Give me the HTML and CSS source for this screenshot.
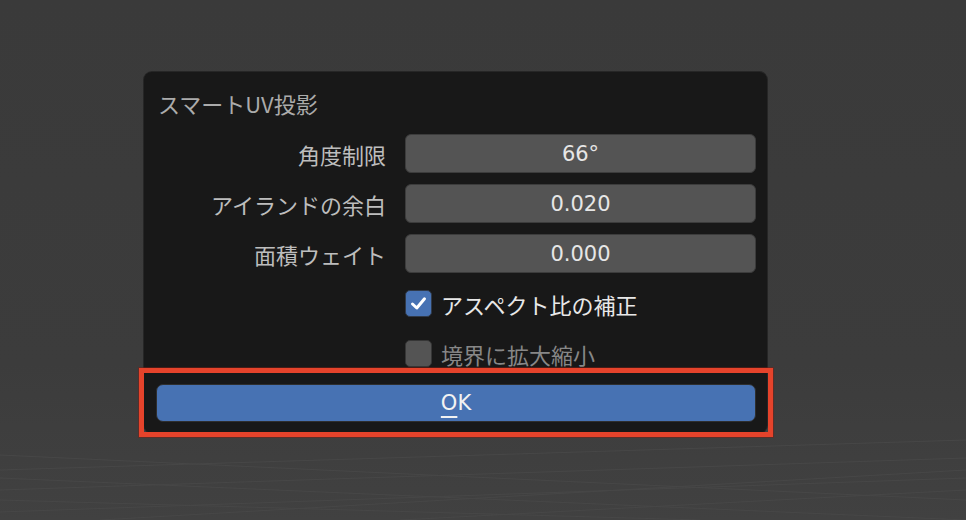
FILE: index.html
```html
<!DOCTYPE html>
<html lang="ja">
<head>
<meta charset="utf-8">
<title>スマートUV投影</title>
<link rel="stylesheet" href="styles.css">
</head>
<body>
<div class="viewport">
  <svg class="grid" width="966" height="520" viewBox="0 0 966 520" aria-hidden="true">
    <g stroke="#474747" stroke-width="1" fill="none">
      <line x1="0" y1="470" x2="966" y2="440"/>
      <line x1="0" y1="490" x2="966" y2="458"/>
      <line x1="0" y1="512" x2="966" y2="478"/>
      <line x1="0" y1="455" x2="966" y2="500"/>
      <line x1="0" y1="478" x2="966" y2="520"/>
      <line x1="0" y1="500" x2="700" y2="520"/>
      <line x1="100" y1="520" x2="966" y2="470"/>
      <line x1="400" y1="520" x2="966" y2="490"/>
    </g>
  </svg>

  <div class="panel">
    <div class="title">スマートUV投影</div>
    <div class="rows">
      <div class="label">角度制限</div>
      <div class="field">66°</div>

      <div class="label">アイランドの余白</div>
      <div class="field">0.020</div>

      <div class="label">面積ウェイト</div>
      <div class="field">0.000</div>

      <div class="label"></div>
      <div class="check on">
        <span class="box"><svg width="19" height="19" viewBox="0 0 19 19"><path d="M3.5 10 L7.8 14 L15.5 4.8" stroke="#fff" stroke-width="3" fill="none" stroke-linecap="round" stroke-linejoin="round"/></svg></span>
        <span class="ctext">アスペクト比の補正</span>
      </div>

      <div class="label"></div>
      <div class="check off">
        <span class="box"></span>
        <span class="ctext">境界に拡大縮小</span>
      </div>
    </div>
    <div class="ok"><span class="ul">O</span>K</div>
  </div>

  <div class="highlight"></div>
</div>
</body>
</html>
```

FILE: styles.css
```css
* { box-sizing: border-box; }

html, body {
  margin: 0;
  padding: 0;
}

body {
  width: 966px;
  height: 520px;
  overflow: hidden;
  background: #3c3c3c;
  font-family: "DejaVu Sans", "Noto Sans CJK JP", sans-serif;
}

.viewport {
  position: relative;
  width: 966px;
  height: 520px;
  background: linear-gradient(#3a3a3a 0%, #3c3c3c 70%, #414141 100%);
}

.grid {
  position: absolute;
  left: 0;
  top: 0;
}

.panel {
  position: absolute;
  left: 144px;
  top: 72px;
  width: 623px;
  padding: 18px 11px 11px 12px;
  background: #181818;
  border-radius: 8px;
  box-shadow: 0 0 0 1px #262626;
}

.title {
  height: 26px;
  line-height: 26px;
  padding-left: 2px;
  margin-bottom: 18px;
  font-size: 22px;
  color: #ababab;
  font-family: "Noto Sans CJK JP", "DejaVu Sans", sans-serif;
}

.rows {
  display: grid;
  grid-template-columns: 230px 351px;
  grid-auto-rows: 39px;
  column-gap: 19px;
  row-gap: 11px;
}

.label {
  display: flex;
  align-items: center;
  justify-content: flex-end;
  font-size: 22px;
  color: #bdbdbd;
  font-family: "Noto Sans CJK JP", "DejaVu Sans", sans-serif;
}

.field {
  display: flex;
  align-items: center;
  justify-content: center;
  background: #545454;
  border: 1px solid #3c3c3c;
  border-radius: 6px;
  font-size: 21px;
  color: #e6e6e6;
}

.check {
  display: flex;
  align-items: center;
  gap: 9px;
}

.box {
  width: 27px;
  height: 27px;
  border-radius: 5px;
  background: #545454;
  border: 1px solid #363636;
  display: flex;
  align-items: center;
  justify-content: center;
}

.check.on .box {
  background: #4772b3;
  border-color: #303a4a;
}

.ctext {
  font-size: 22px;
  font-family: "Noto Sans CJK JP", "DejaVu Sans", sans-serif;
}

.check.on .ctext { color: #e8e8e8; }
.check.off .ctext { color: #878787; }

.ok {
  margin-top: 11px;
  height: 38px;
  display: flex;
  align-items: center;
  justify-content: center;
  background: #4772b3;
  border: 1px solid #2e2e2e;
  border-radius: 7px;
  color: #f2f2f2;
  font-size: 21px;
}

.ul {
  text-decoration: underline;
  text-decoration-thickness: 2px;
  text-underline-offset: 6px;
}

.highlight {
  position: absolute;
  left: 139px;
  top: 368px;
  width: 634px;
  height: 69px;
  border: 5px solid #e5432b;
  box-shadow: 0 0 0 1px rgba(120, 30, 20, 0.5);
}
```
